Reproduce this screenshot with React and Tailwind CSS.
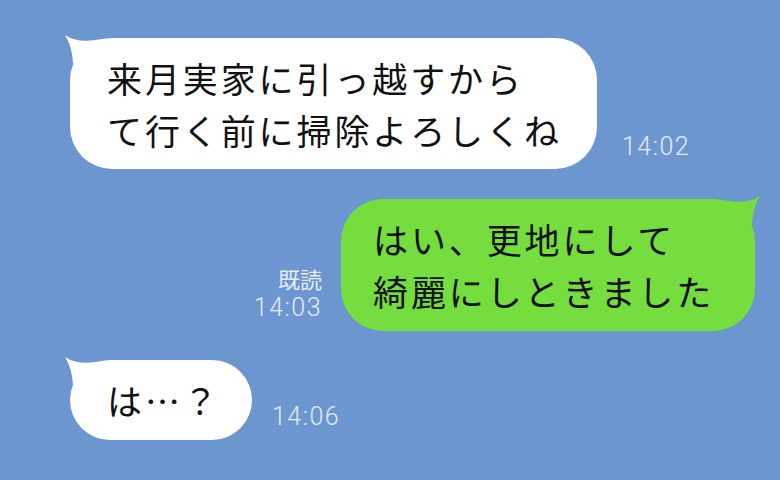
function Tail({ color, flip }) {
  return (
    <svg
      width="40"
      height="40"
      viewBox="0 0 40 40"
      className={
        flip
          ? "absolute -right-[8px] -top-[6px] -scale-x-100"
          : "absolute -left-[8px] -top-[6px]"
      }
    >
      <path d="M3 3 Q16 12 40 7 L40 31 L11 31 Q10 14 3 3 Z" fill={color} />
    </svg>
  )
}

function Bubble({ children, className, color, flip }) {
  return (
    <div className={"relative shrink-0 flex items-center " + className}>
      <Tail color={color} flip={flip} />
      <div className="relative text-[35px] leading-[52px] tracking-[2.9px] text-[#111]">
        {children}
      </div>
    </div>
  )
}

function Time({ children, className }) {
  return (
    <div className={"text-[25px] leading-[24px] tracking-[1.5px] font-light text-[#e4ecf7] " + className}>
      {children}
    </div>
  )
}

export default function App() {
  return (
    <div
      lang="ja"
      className="w-[780px] h-[480px] overflow-hidden bg-[#6b96cf] flex flex-col pt-[38px]"
      style={{ fontFamily: '"Noto Sans CJK JP", "Noto Sans", sans-serif' }}
    >
      <div className="flex items-end pl-[70px] gap-[25px]">
        <Bubble color="#ffffff" className="w-[527px] h-[131px] rounded-[42px] bg-white pl-[37px]">
          来月実家に引っ越すから
          <br />
          て行く前に掃除よろしくね
        </Bubble>
        <Time className="mb-[10px] font-['Roboto',sans-serif]">14:02</Time>
      </div>

      <div className="mt-[30px] flex items-end justify-end pr-[25px] gap-[19px]">
        <div className="flex flex-col items-end mb-[8px] text-[#e4ecf7]">
          <div className="text-[22px] leading-[30px]">既読</div>
          <div className="text-[25px] leading-[30px] tracking-[1.5px] font-light font-['Roboto',sans-serif]">
            14:03
          </div>
        </div>
        <Bubble color="#75dd3d" flip className="w-[414px] h-[132px] rounded-[42px] bg-[#75dd3d] pl-[32px]">
          はい、更地にして
          <br />
          綺麗にしときました
        </Bubble>
      </div>

      <div className="mt-[29px] flex items-end pl-[70px] gap-[20px]">
        <Bubble color="#ffffff" className="w-[182px] h-[80px] rounded-[40px] bg-white pl-[37px]">
          は…？
        </Bubble>
        <Time className="mb-[11px] font-['Roboto',sans-serif]">14:06</Time>
      </div>
    </div>
  )
}
